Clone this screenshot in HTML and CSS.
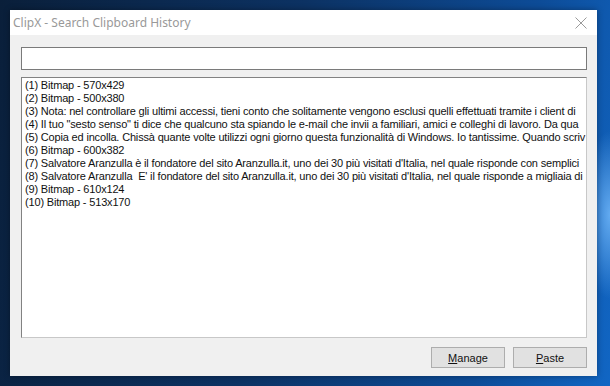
FILE: index.html
```html
<!DOCTYPE html>
<html lang="it">
  <head>
    <meta charset="UTF-8" />
    <title>ClipX - Search Clipboard History</title>
    <link rel="stylesheet" href="styles.css">
  </head>
  <body>
    <div class="window">
      <div class="titlebar">
        <span class="title">ClipX - Search Clipboard History</span>
        <svg class="close" width="12" height="12" viewBox="0 0 12 12">
          <path d="M0.5 0.5 L11.5 11.5 M11.5 0.5 L0.5 11.5" stroke="#9a9a9a" stroke-width="1" fill="none" />
        </svg>
      </div>
      <div class="content">
        <input type="text" class="search" />
        <div class="list">
          <div>(1) Bitmap - 570x429</div>
          <div>(2) Bitmap - 500x380</div>
          <div>(3) Nota: nel controllare gli ultimi accessi, tieni conto che solitamente vengono esclusi quelli effettuati tramite i client di</div>
          <div>(4) Il tuo "sesto senso" ti dice che qualcuno sta spiando le e-mail che invii a familiari, amici e colleghi di lavoro. Da qua</div>
          <div>(5) Copia ed incolla. Chissà quante volte utilizzi ogni giorno questa funzionalità di Windows. Io tantissime. Quando scriv</div>
          <div>(6) Bitmap - 600x382</div>
          <div>(7) Salvatore Aranzulla è il fondatore del sito Aranzulla.it, uno dei 30 più visitati d'Italia, nel quale risponde con semplici</div>
          <div>(8) Salvatore Aranzulla&nbsp; E' il fondatore del sito Aranzulla.it, uno dei 30 più visitati d'Italia, nel quale risponde a migliaia di</div>
          <div>(9) Bitmap - 610x124</div>
          <div>(10) Bitmap - 513x170</div>
        </div>
        <div class="buttons">
          <button><u>M</u>anage</button>
          <button><u>P</u>aste</button>
        </div>
      </div>
    </div>
  </body>
</html>
```

FILE: styles.css
```css
html, body {
  height: 100%;
}
body {
  margin: 0;
  overflow: hidden;
  background:
    radial-gradient(ellipse 40px 120px at 610px 215px, rgba(120, 190, 255, 0.8), rgba(120, 190, 255, 0) 70%),
    linear-gradient(100deg, #0a1f3a 0%, #0c3263 45%, #0d4c98 80%, #1166c4 100%);
  font-family: "Liberation Sans", Arial, sans-serif;
}
.window {
  margin: 10px 0 0 10px;
  width: 587px;
  height: 366px;
  display: flex;
  flex-direction: column;
  background: #f0f0f0;
  box-shadow: 0 0 6px rgba(0, 0, 0, 0.35);
}
.titlebar {
  height: 26px;
  background: #ffffff;
  display: flex;
  align-items: center;
  justify-content: space-between;
  padding: 0 10px 0 3px;
}
.title {
  font-family: "Noto Sans", "Open Sans", sans-serif;
  font-size: 12px;
  color: #999999;
}
.content {
  flex: 1;
  display: flex;
  flex-direction: column;
  padding: 12px 10px 8px 11px;
}
.search {
  height: 23px;
  box-sizing: border-box;
  margin: 0;
  border: 1px solid #7a7a7a;
  background: #ffffff;
  outline: none;
}
.list {
  margin-top: 7px;
  height: 261px;
  box-sizing: border-box;
  border: 1px solid #828282;
  border-right-color: #c8c8c8;
  border-bottom-color: #c8c8c8;
  background: #ffffff;
  padding: 1px 0 0 3px;
  overflow: hidden;
  white-space: nowrap;
  font-size: 11px;
  line-height: 13px;
  color: #111111;
  letter-spacing: -0.17px;
}
.buttons {
  margin-top: 9px;
  display: flex;
  justify-content: flex-end;
  gap: 8px;
}
.buttons button {
  width: 74px;
  height: 21px;
  margin: 0;
  padding: 0;
  background: #e1e1e1;
  border: 1px solid #adadad;
  font-family: "Liberation Sans", Arial, sans-serif;
  font-size: 11px;
  color: #111111;
}
```
